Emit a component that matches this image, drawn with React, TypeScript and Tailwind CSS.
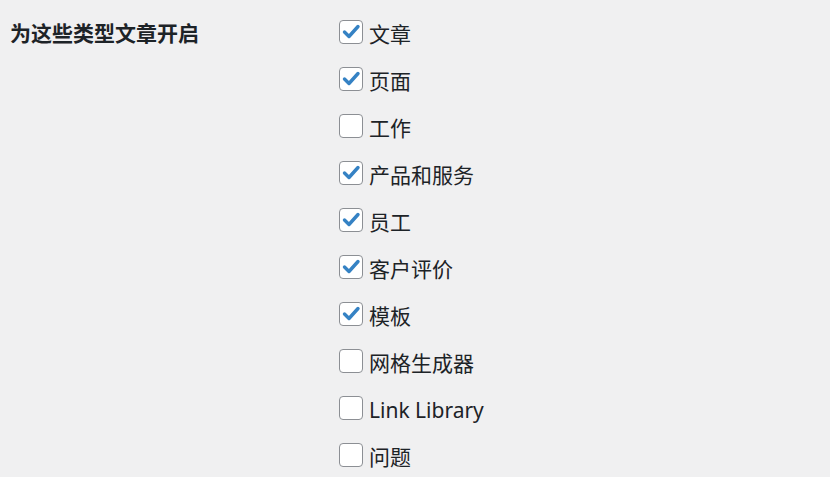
const POST_TYPES = [
  { label: "文章", checked: true },
  { label: "页面", checked: true },
  { label: "工作", checked: false },
  { label: "产品和服务", checked: true },
  { label: "员工", checked: true },
  { label: "客户评价", checked: true },
  { label: "模板", checked: true },
  { label: "网格生成器", checked: false },
  { label: "Link Library", checked: false },
  { label: "问题", checked: false },
];

function Checkbox({ checked }: { checked: boolean }) {
  return (
    <span className="w-[24px] h-[24px] shrink-0 rounded-[4px] border border-[#8c8f94] bg-white flex items-center justify-center">
      {checked && (
        <svg width="22" height="22" viewBox="0 0 22 22">
          <path d="M4.5 11l4.5 4.5L18 5.5" fill="none" stroke="#3582c4" strokeWidth="3.4" strokeLinecap="round" strokeLinejoin="round" />
        </svg>
      )}
    </span>
  );
}

export default function App() {
  return (
    <div
      className="w-[830px] h-[477px] bg-[#f0f0f1] text-[#1d2327] flex overflow-hidden"
      style={{ fontFamily: '"Noto Sans", "Noto Sans CJK SC", sans-serif' }}
    >
      {/* label column */}
      <div className="w-[339px] shrink-0 pl-[10px] pt-[21px]">
        <div className="h-[24px] flex items-center text-[21px] font-bold leading-none">为这些类型文章开启</div>
      </div>

      {/* checkbox list */}
      <div className="flex flex-col gap-[23px] pt-[20px]">
        {POST_TYPES.map(t => (
          <label key={t.label} className="h-[24px] flex items-center gap-[6px]">
            <Checkbox checked={t.checked} />
            <span className="text-[21px] leading-none pt-[4px]">{t.label}</span>
          </label>
        ))}
      </div>
    </div>
  );
}
